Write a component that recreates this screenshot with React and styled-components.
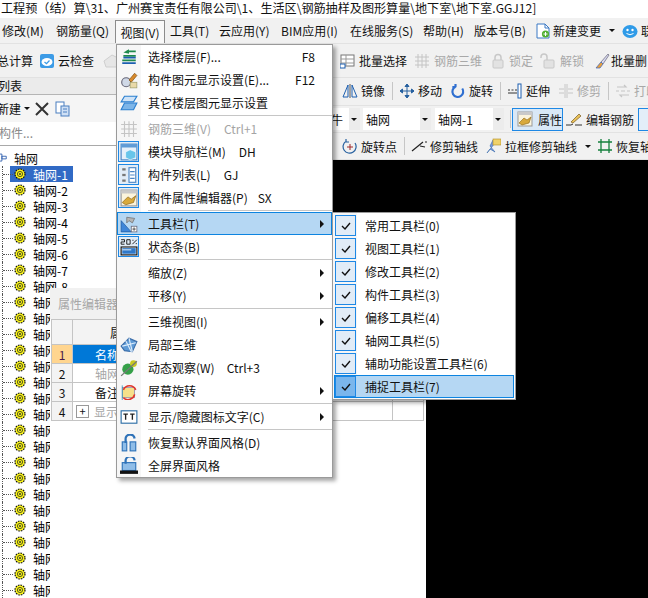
import React from "react";
import styled, { createGlobalStyle } from "styled-components";

const GlobalStyle = createGlobalStyle`
  html, body { margin: 0; padding: 0; background: #fff; }
  body { font-family: "Noto Sans CJK SC", "Noto Sans", sans-serif; font-size: 12px; color: #111; }
`;

/* ---------- icons ---------- */
const Svg = ({ children, size = 16 }) => (
  <svg width={size} height={size} viewBox="0 0 16 16" fill="none" style={{ flex: "none", display: "block" }}>
    {children}
  </svg>
);

const icons = {
  floors: <><path d="M6 3h8M3 7h11M2 11h12" stroke="#1f8a4c" strokeWidth="1.4" /><path d="M2 13.5h12M3 8.5h11" stroke="#1c5fb0" strokeWidth="1.6" /><path d="M8 1L3 4l5 1z" fill="#1f8a4c" /></>,
  display: <><circle cx="5.5" cy="10" r="4" fill="#cfd8e6" stroke="#667" /><path d="M8 8l5-6 2 2-5 6z" fill="#d98a2b" stroke="#7a4a10" strokeWidth=".6" /><rect x="9" y="10" width="6" height="5" fill="#e9d9a8" stroke="#996" strokeWidth=".6" /></>,
  otherFloors: <><path d="M4 2h11l-3 5H1z" fill="#cfe3f7" stroke="#2a7fd0" /><path d="M4 8h11l-3 6H1z" fill="#7db5e8" stroke="#2a7fd0" /></>,
  grid3d: <><path d="M1 4h14M1 8h14M1 12h14M4 1v14M8 1v14M12 1v14" stroke="#c4c4c4" /></>,
  nav: <><rect x="1" y="1" width="14" height="14" fill="#e6f0fa" stroke="#4a86c5" /><rect x="1" y="1" width="14" height="3" fill="#5f9bd6" /><path d="M9 6l5 2v5l-5 2-4-2V8z" fill="#68c5ea" stroke="#fff" strokeWidth=".5" /></>,
  list: <><rect x="2" y="2" width="3" height="2" fill="#777" /><rect x="2" y="7" width="3" height="2" fill="#777" /><rect x="2" y="12" width="3" height="2" fill="#777" /><rect x="8" y="1.5" width="6" height="13" fill="#fff" stroke="#4a86c5" /><path d="M9 5h4M9 8h4M9 11h4" stroke="#4a86c5" /></>,
  attr: <><rect x="1" y="1" width="14" height="14" fill="#fbf4dc" stroke="#999" /><rect x="1" y="1" width="14" height="3" fill="#c9c9c9" /><path d="M2 12l5-5 3 2 4-3-2 6-7 2z" fill="#d8a93c" stroke="#8a6414" strokeWidth=".6" /></>,
  toolbar: <><path d="M1 15V5l9 10z" fill="#3f86d8" stroke="#1a549c" strokeWidth=".6" /><path d="M6 2l7 1-2 4-3-2-2 2z" fill="#b5b5b5" stroke="#666" strokeWidth=".6" /><rect x="10" y="10" width="5" height="5" fill="#fff" stroke="#667" strokeWidth=".7" /><path d="M11 12.5h3M12.5 11v3" stroke="#333" strokeWidth=".7" /></>,
  status: <><rect x="1" y="8" width="14" height="7" fill="#fff" stroke="#111" /><rect x="2" y="9" width="12" height="5" fill="#2f78c9" /><path d="M2 10.5h8" stroke="#cfe3f7" /><path d="M1 1.5h3v2H1v2h3M6 1.5h3v4H6zM11 5.5l4-4M11 2h1M14 5h1" stroke="#111" strokeWidth=".8" /></>,
  local3d: <><path d="M1 9L8 2l7 3-4 9-7-1z" fill="#5f9bd6" stroke="#3a6ca8" /><path d="M5 4l5 10M8 2l3 12M2 9l12-3" stroke="#dcecfa" /></>,
  orbit: <><ellipse cx="7" cy="9" rx="5" ry="5" fill="#35a048" /><circle cx="12" cy="4" r="3" fill="#c8c820" /><path d="M1 15L15 2" stroke="#777" strokeWidth="1.2" /></>,
  rotate: <><rect x="2" y="5" width="11" height="9" fill="#f6e08a" stroke="#66a" strokeWidth=".5" /><path d="M3 7a6 6 0 0 1 11 0M13 11a6 6 0 0 1-10 3" stroke="#e0352b" strokeWidth="1.4" /><path d="M2 3v13" stroke="#39b" strokeWidth=".7" /></>,
  tt: <><rect x="1" y="2.5" width="14" height="11" fill="#fff" stroke="#2b6ea6" /><path d="M3 5.5h4M5 5.5v5M9 5.5h4M11 5.5v5" stroke="#222" strokeWidth="1.2" /></>,
  restore: <><rect x="2" y="7" width="4" height="8" fill="#8fbde8" stroke="#2e72b8" /><rect x="9" y="7" width="5" height="8" fill="#8fbde8" stroke="#2e72b8" /><path d="M5 8V5a4 4 0 0 1 8-1" stroke="#2e72b8" strokeWidth="2" /></>,
  full: <><rect x="2" y="5" width="12" height="7" fill="#8fbde8" stroke="#2e72b8" /><path d="M5 6V4a4 4 0 0 1 8-1" stroke="#2e72b8" strokeWidth="2" /><rect x="0" y="12" width="16" height="3" fill="#111" /></>,
  cloud: <><rect x="1" y="1" width="14" height="14" rx="2" fill="#3c9be6" /><ellipse cx="8" cy="9" rx="5.5" ry="4" fill="#fff" /><path d="M5.5 9l2 1.7 3-3.2" stroke="#3c9be6" strokeWidth="1.3" /></>,
  batch: <><rect x="1" y="2" width="13" height="11" fill="#fff" stroke="#777" /><path d="M1 6h13M1 10h13M6 2v11" stroke="#999" /><rect x="0" y="11" width="5" height="4" fill="#fff" stroke="#1c5fb0" /></>,
  lock: <><rect x="3" y="7" width="10" height="8" rx="1" fill="#e2e2e2" stroke="#c8c8c8" /><path d="M5 7V4.5a3 3 0 0 1 6 0V7" stroke="#c8c8c8" strokeWidth="1.5" /></>,
  unlock: <><rect x="4" y="7" width="10" height="8" rx="1" fill="#e2e2e2" stroke="#c8c8c8" /><path d="M1 5V4a3 3 0 0 1 6 0v3" stroke="#c8c8c8" strokeWidth="1.5" /></>,
  brush: <><path d="M7 9l7-8 1 1-6 9z" fill="#d8d8f0" stroke="#667" strokeWidth=".7" /><path d="M7 9l2 2-3 4H2z" fill="#e8a13c" stroke="#3a63c0" strokeWidth=".7" /></>,
  mirror: <><path d="M1 14L6 2v12z" stroke="#1c5fb0" /><path d="M15 14L10 2v12z" stroke="#1c5fb0" /><path d="M8 1v14" stroke="#555" /></>,
  move: <path d="M8 1v14M1 8h14M8 1L6 3.5h4zM8 15l-2-2.5h4zM1 8l2.5-2v4zM15 8l-2.5-2v4z" stroke="#26609f" fill="#26609f" />,
  rotateBlue: <path d="M12.5 5A6 6 0 1 1 5 3M5 3.5V0M5 3.5H1.5" stroke="#2f6fd0" strokeWidth="2.4" transform="translate(1 1) scale(.9)" />,
  extend: <><rect x="11" y="1" width="3" height="14" fill="#fff" stroke="#1c5fb0" /><path d="M1 7h2M4.5 7h2M8 7h2M1 10h9" stroke="#333" /></>,
  trim: <path d="M1 6h5M1 10h5M10 6h5M10 10h5M7 1v14M9 1v14" stroke="#c6c6c6" />,
  print: <path d="M2 4h9l-2-2M14 12H5l2 2M1 8h3M6 8h4M12 8h3" stroke="#c6c6c6" strokeWidth="1.2" />,
  pencil: <><path d="M5 11l8-8 2 2-8 7z" fill="#e8c15a" stroke="#7a5a20" strokeWidth=".7" /><path d="M0 14h5l2-1M9 14h7" stroke="#333" /></>,
  rotatePoint: <><path d="M13 5a6.5 6.5 0 1 1-9-1.8M4 1v3h3" stroke="#26609f" strokeWidth="1.2" /><path d="M8 6v6M5 9h6" stroke="#a0282a" /></>,
  trimAxis: <path d="M1 13L12 4M9 8l5 1M14 4h2" stroke="#222" strokeWidth="1.2" />,
  boxTrim: <><path d="M2 15L10 5l-2-3-3 6 5 6-5-3z" fill="#7a9ae0" stroke="#36a" strokeWidth=".6" /><rect x="8" y="1" width="8" height="6" fill="#f0d26a" stroke="#b08a20" strokeWidth=".6" /></>,
  recover: <path d="M1 4h14M1 12h14M4 1v14M12 1v14" stroke="#15803d" strokeWidth="1.3" />,
  change: <><path d="M2 1h8l4 4v10H2z" fill="#fff" stroke="#3a78c4" /><path d="M10 1v4h4" stroke="#3a78c4" /><circle cx="10.5" cy="11" r="3.6" fill="#53b033" /><path d="M10.5 9v4M8.5 11h4" stroke="#fff" /></>,
  qq: <><ellipse cx="8" cy="8.5" rx="7.5" ry="6.5" fill="#2f9be8" /><circle cx="5.5" cy="7" r="1.2" fill="#fff" /><circle cx="10.5" cy="7" r="1.2" fill="#fff" /><path d="M4.5 10.5q3.5 2.5 7 0" stroke="#fff" /></>,
  tree: <><path d="M1 2h5v3H1zM1 10h5v3H1zM9 6h5v3H9z" stroke="#2e5fae" /><path d="M6 3.5h3v4M6 11.5h3v-4" stroke="#2e5fae" /></>,
  copy: <><rect x="1" y="1" width="8" height="11" fill="#fff" stroke="#4a7fc0" /><rect x="6" y="5" width="8" height="10" fill="#cfe0f5" stroke="#4a7fc0" /><path d="M8 8h4M8 11h4" stroke="#4a7fc0" /></>,
  close: <path d="M2 2l12 12M14 2L2 14" stroke="#333" strokeWidth="2" />,
  house: <path d="M1 8l8-6 6 3v9H3z" fill="#e6e6e6" stroke="#cfcfcf" />,
};

const Icon = ({ name, size }) => <Svg size={size}>{icons[name]}</Svg>;

const Gear = () => (
  <svg width="12" height="12" viewBox="0 0 12 12" style={{ flex: "none", display: "block" }}>
    <circle cx="6" cy="6" r="5" fill="#f7f21a" stroke="#111" strokeWidth="1.2" strokeDasharray="1.6 1" />
    <circle cx="6" cy="6" r="2.6" fill="#f7f21a" stroke="#5a5a20" strokeWidth="1" />
    <circle cx="6" cy="6" r="1" fill="#333" />
  </svg>
);

/* ---------- page frame ---------- */
const Page = styled.div`
  position: relative;
  width: 648px;
  height: 598px;
  overflow: hidden;
  background: #f0f0f0;
  display: flex;
  flex-direction: column;
`;

const TitleBar = styled.div`
  height: 18px;
  flex: none;
  background: #fff;
  white-space: nowrap;
  font-size: 12.1px;
  line-height: 15px;
  padding-left: 1px;
`;

const Bar = styled.div`
  display: flex;
  align-items: center;
  flex: none;
  height: ${(p) => p.$h}px;
  padding-bottom: ${(p) => p.$lift || 0}px;
  background: #f1f1f1;
  border-bottom: 1px solid #e2e2e2;
  box-sizing: border-box;
  white-space: nowrap;
  overflow: hidden;
`;

const Cell = styled.div`
  display: flex;
  align-items: center;
  gap: ${(p) => p.$gap ?? 3}px;
  width: ${(p) => p.$w}px;
  flex: none;
  color: ${(p) => (p.$off ? "#a8a8a8" : "#111")};
`;

const MenuTab = styled(Cell)`
  height: 23px;
  align-self: flex-end;
  box-sizing: border-box;
  justify-content: center;
  background: #f9f9f9;
  border: 1px solid #8c8c8c;
  border-bottom: none;
`;

const ClippedLead = styled.span`
  margin-left: -3px;
`;

const Divider = styled.span`
  width: 1px;
  height: 18px;
  background: #c6c6c6;
  flex: none;
  margin-right: ${(p) => p.$mr}px;
`;

const Caret = styled.span`
  width: 0;
  height: 0;
  border-left: 3px solid transparent;
  border-right: 3px solid transparent;
  border-top: 3px solid #111;
`;

const Workspace = styled.div`
  flex: 1;
  display: flex;
  min-height: 0;
`;

/* ---------- left panel ---------- */
const LeftPanel = styled.div`
  width: 118px;
  flex: none;
  display: flex;
  flex-direction: column;
  background: #fff;
  overflow: hidden;
`;

const PanelTitle = styled.div`
  height: 16px;
  background: #ebebeb;
  border-bottom: 1px solid #b5b5b5;
  line-height: 16px;
  margin-left: -2px;
  flex: none;
`;

const PanelTools = styled.div`
  height: 27px;
  display: flex;
  align-items: center;
  background: #f5f5f5;
  margin-left: -3px;
  flex: none;
`;

const SearchBox = styled.div`
  height: 23px;
  background: #fff;
  border-bottom: 1px solid #a9a9a9;
  color: #8a8a8a;
  line-height: 22px;
  margin-left: -1px;
  flex: none;
`;

const Tree = styled.div`
  flex: 1;
  padding-top: 4px;
  font-size: 12px;
`;

const TreeRoot = styled.div`
  display: flex;
  align-items: center;
  gap: 6px;
  height: 16px;
  margin-left: -6px;
`;

const TreeRow = styled.div`
  position: relative;
  height: 16px;
  display: flex;
  align-items: center;
  padding-left: 14px;
  &::before {
    content: "";
    position: absolute;
    left: 2px;
    top: 0;
    bottom: 0;
    border-left: 1px dotted #555;
  }
  &::after {
    content: "";
    position: absolute;
    left: 3px;
    top: 8px;
    width: 10px;
    border-top: 1px dotted #555;
  }
`;

const TreeLabel = styled.span`
  display: flex;
  align-items: center;
  gap: 7px;
  height: 16px;
  width: ${(p) => p.$w}px;
  flex: none;
  box-sizing: border-box;
  margin-left: -4px;
  padding-left: 4px;
  white-space: nowrap;
  overflow: hidden;
  background: ${(p) => (p.$on ? "#316ac5" : "transparent")};
  color: ${(p) => (p.$on ? "#fff" : "#000")};
`;

/* ---------- right side ---------- */
const RightSide = styled.div`
  flex: 1;
  display: flex;
  flex-direction: column;
  min-width: 0;
`;

const Combo = styled.div`
  width: ${(p) => p.$w}px;
  height: 22px;
  flex: none;
  display: flex;
  align-items: center;
  justify-content: space-between;
  box-sizing: border-box;
  padding: 0 3px 0 3px;
  margin-right: ${(p) => p.$mr}px;
  overflow: hidden;
  background: linear-gradient(to right, #fff calc(100% - 11px), #ececec calc(100% - 11px));
`;

const ToggleButton = styled.div`
  display: flex;
  align-items: center;
  gap: 5px;
  height: 23px;
  width: 51px;
  flex: none;
  box-sizing: border-box;
  padding-left: 4px;
  border: 1px solid #1e88e5;
  background: #d9e8f6;
`;

const ToggleBox = styled.div`
  width: 22px;
  height: 23px;
  flex: none;
  border: 1px solid #1e88e5;
  box-sizing: border-box;
  background: #e3eef9;
`;

const Canvas = styled.div`
  flex: 1;
  background: #000;
`;

/* ---------- property window ---------- */
const PropWindow = styled.div`
  position: absolute;
  left: 50px;
  top: 288px;
  width: 376px;
  height: 310px;
  background: #fff;
  display: flex;
  flex-direction: column;
`;

const PropTitle = styled.div`
  height: 31px;
  flex: none;
  background: #f1f1f1;
  color: #a6a6a6;
  padding: 7px 0 0 8px;
  box-sizing: border-box;
`;

const PropGrid = styled.div`
  margin-left: 1px;
  display: grid;
  grid-template-columns: 21px 58px 262px 31px;
  grid-template-rows: 25px 19px 19px 19px 19px;
  border-top: 1px solid #c4c4c4;
  border-left: 1px solid #c4c4c4;
`;

const PropCell = styled.div`
  display: flex;
  align-items: center;
  gap: 5px;
  box-sizing: border-box;
  padding-left: ${(p) => p.$pad ?? 0}px;
  justify-content: ${(p) => (p.$center ? "center" : "flex-start")};
  border-right: 1px solid #c4c4c4;
  border-bottom: 1px solid #c4c4c4;
  background: ${(p) => p.$bg || "#fff"};
  color: ${(p) => p.$color || "#111"};
  white-space: nowrap;
  overflow: hidden;
`;

const PlusBox = styled.span`
  width: 11px;
  height: 11px;
  border: 1px solid #999;
  font-size: 11px;
  line-height: 10px;
  text-align: center;
  color: #111;
  flex: none;
`;

/* ---------- menus ---------- */
const Menu = styled.div`
  position: absolute;
  left: ${(p) => p.$x}px;
  top: ${(p) => p.$y}px;
  width: ${(p) => p.$w}px;
  box-sizing: border-box;
  padding: ${(p) => p.$pad}px;
  background: linear-gradient(to right, #f6f6f6 ${(p) => p.$gutter}px, #fff ${(p) => p.$gutter}px);
  border: 1px solid #9a9a9a;
  box-shadow: 3px 3px 4px rgba(0, 0, 0, 0.35);
`;

const Row = styled.div`
  position: relative;
  display: flex;
  align-items: center;
  height: 23px;
  box-sizing: border-box;
  padding-left: 31px;
  color: ${(p) => (p.$off ? "#a4a4a4" : "#111")};
  background: ${(p) => (p.$hot ? "#b5d7f3" : "transparent")};
  outline: ${(p) => (p.$hot ? "1px solid #0d84e0" : "none")};
  outline-offset: -1px;
`;

const RowIcon = styled.span`
  position: absolute;
  left: 1px;
  top: 1px;
  width: 21px;
  height: 21px;
  box-sizing: border-box;
  display: flex;
  align-items: center;
  justify-content: center;
  border: 1px solid ${(p) => (p.$on ? "#1e88e5" : "transparent")};
  background: ${(p) => (p.$on ? (p.$hot ? "#7ab6ec" : "#e1ecf7") : "transparent")};
`;

const Shortcut = styled.span`
  margin-left: ${(p) => p.$gap}px;
`;

const RightKey = styled.span`
  position: absolute;
  right: 17px;
`;

const Arrow = styled.span`
  position: absolute;
  right: 8px;
  width: 0;
  height: 0;
  border-top: 4px solid transparent;
  border-bottom: 4px solid transparent;
  border-left: 4px solid #111;
`;

const Separator = styled.div`
  height: 1px;
  margin: 1px 0 1px 31px;
  background: #c6c6c6;
`;

/* ---------- data ---------- */
const viewMenu = [
  { icon: "floors", label: "选择楼层(F)...", key: "F8" },
  { icon: "display", label: "构件图元显示设置(E)...", key: "F12" },
  { icon: "otherFloors", label: "其它楼层图元显示设置" },
  "sep",
  { icon: "grid3d", label: "钢筋三维(V)", short: "Ctrl+1", gap: 13, off: true },
  { icon: "nav", label: "模块导航栏(M)", short: "DH", gap: 13, on: true },
  { icon: "list", label: "构件列表(L)", short: "GJ", gap: 13, on: true },
  { icon: "attr", label: "构件属性编辑器(P)", short: "SX", gap: 10, on: true },
  "sep",
  { icon: "toolbar", label: "工具栏(T)", sub: true, hot: true },
  { icon: "status", label: "状态条(B)", on: true },
  "sep",
  { label: "缩放(Z)", sub: true },
  { label: "平移(Y)", sub: true },
  "sep",
  { label: "三维视图(I)", sub: true },
  { icon: "local3d", label: "局部三维" },
  { icon: "orbit", label: "动态观察(W)", short: "Ctrl+3", gap: 12 },
  { icon: "rotate", label: "屏幕旋转", sub: true },
  "sep",
  { icon: "tt", label: "显示/隐藏图标文字(C)", sub: true },
  "sep",
  { icon: "restore", label: "恢复默认界面风格(D)" },
  { icon: "full", label: "全屏界面风格" },
];

const toolbarMenu = ["常用工具栏(0)", "视图工具栏(1)", "修改工具栏(2)", "构件工具栏(3)", "偏移工具栏(4)", "轴网工具栏(5)", "辅助功能设置工具栏(6)", "捕捉工具栏(7)"];

const Check = () => (
  <svg width="10" height="8" viewBox="0 0 10 8" style={{ display: "block" }}>
    <path d="M1 4l3 3 5-6" stroke="#111" strokeWidth="1.4" fill="none" />
  </svg>
);

const T = ({ w, icon, off, gap, children }) => (
  <Cell $w={w} $off={off} $gap={gap}>
    {icon && <Icon name={icon} />}
    {children}
  </Cell>
);

const App = () => {
  return (
    <Page>
      <GlobalStyle />
      <TitleBar>工程预（结）算\31、广州赛宝责任有限公司\1、生活区\钢筋抽样及图形算量\地下室\地下室.GGJ12]</TitleBar>

      <Bar $h={26}>
        <T w={2} />
        <T w={54}>修改(M)</T>
        <T w={59}>钢筋量(Q)</T>
        <MenuTab $w={50}>视图(V)</MenuTab>
        <T w={5} />
        <T w={49}>工具(T)</T>
        <T w={62}>云应用(Y)</T>
        <T w={69}>BIM应用(I)</T>
        <T w={73}>在线服务(S)</T>
        <T w={51}>帮助(H)</T>
        <T w={61}>版本号(B)</T>
        <T w={18} icon="change" />
        <T w={56}>新建变更</T>
        <T w={13}><Caret /></T>
        <T w={19} icon="qq" />
        <T w={12}>联</T>
      </Bar>

      <Bar $h={34}>
        <T w={39}><ClippedLead>总计算</ClippedLead></T>
        <T w={64} icon="cloud">云检查</T>
        <T w={237} icon="house" />
        <T w={74} icon="batch">批量选择</T>
        <T w={76} icon="grid3d" off gap={4}>钢筋三维</T>
        <T w={50} icon="lock" off>锁定</T>
        <T w={54} icon="unlock" off gap={4}>解锁</T>
        <T w={60} icon="brush" gap={1}>批量删</T>
      </Bar>

      <Workspace>
        <LeftPanel>
          <PanelTitle>列表</PanelTitle>
          <PanelTools>
            <T w={27}>新建</T>
            <T w={10}><Caret /></T>
            <T w={21} icon="close" />
            <T w={20} icon="copy" />
          </PanelTools>
          <SearchBox>构件...</SearchBox>
          <Tree>
            <TreeRoot>
              <Icon name="tree" size={14} />
              <span>轴网</span>
            </TreeRoot>
            {Array.from({ length: 27 }, (_, i) => (
              <TreeRow key={i}>
                <TreeLabel $on={i === 0} $w={i < 8 ? 63 : 40}>
                  <Gear />
                  轴网-{i + 1}
                </TreeLabel>
              </TreeRow>
            ))}
          </Tree>
        </LeftPanel>

        <RightSide>
          <Bar $h={28} $lift={2}>
            <T w={224} />
            <T w={50} icon="mirror">镜像</T>
            <Divider $mr={6} />
            <T w={51} icon="move">移动</T>
            <T w={50} icon="rotateBlue">旋转</T>
            <Divider $mr={6} />
            <T w={51} icon="extend">延伸</T>
            <T w={50} icon="trim" off>修剪</T>
            <Divider $mr={6} />
            <T w={40} icon="print" off>打印</T>
          </Bar>
          <Bar $h={27}>
            <T w={210} />
            <Combo $w={32} $mr={3}>牛<Caret /></Combo>
            <Combo $w={68} $mr={4}>轴网<Caret /></Combo>
            <Combo $w={69} $mr={6}>轴网-1<Caret /></Combo>
            <Divider $mr={1} />
            <ToggleButton>
              <Icon name="attr" />
              属性
            </ToggleButton>
            <T w={3} />
            <T w={72} icon="pencil" gap={4}>编辑钢筋</T>
            <ToggleBox />
          </Bar>
          <Bar $h={27}>
            <T w={224} />
            <T w={62} icon="rotatePoint">旋转点</T>
            <Divider $mr={6} />
            <T w={74} icon="trimAxis">修剪轴线</T>
            <T w={100} icon="boxTrim" gap={4}>拉框修剪轴线</T>
            <T w={12}><Caret /></T>
            <T w={60} icon="recover">恢复轴</T>
          </Bar>
          <Canvas />
        </RightSide>
      </Workspace>

      <PropWindow>
        <PropTitle>属性编辑器</PropTitle>
        <PropGrid>
          <PropCell $bg="#f3f3f3" />
          <PropCell $bg="#f3f3f3" $pad={37}>属性</PropCell>
          <PropCell $bg="#f3f3f3" />
          <PropCell $bg="#f3f3f3" />

          <PropCell $bg="#ffd58f" $center $color="#4a1a4a">1</PropCell>
          <PropCell $bg="#0078d7" $color="#fff" $pad={22}>名称</PropCell>
          <PropCell />
          <PropCell />

          <PropCell $bg="#f3f3f3" $center>2</PropCell>
          <PropCell $color="#a6a6a6" $pad={22}>轴网</PropCell>
          <PropCell />
          <PropCell />

          <PropCell $bg="#f3f3f3" $center>3</PropCell>
          <PropCell $pad={22}>备注</PropCell>
          <PropCell />
          <PropCell />

          <PropCell $bg="#f3f3f3" $center>4</PropCell>
          <PropCell $color="#a6a6a6" $pad={3}><PlusBox>+</PlusBox>显示</PropCell>
          <PropCell />
          <PropCell />
        </PropGrid>
      </PropWindow>

      <Menu $x={116} $y={44} $w={217} $pad={0} $gutter={24}>
        {viewMenu.map((item, i) =>
          item === "sep" ? (
            <Separator key={i} />
          ) : (
            <Row key={i} $off={item.off} $hot={item.hot}>
              {item.icon && (
                <RowIcon $on={item.on}>
                  <Icon name={item.icon} size={18} />
                </RowIcon>
              )}
              {item.label}
              {item.short && <Shortcut $gap={item.gap}>{item.short}</Shortcut>}
              {item.key && <RightKey>{item.key}</RightKey>}
              {item.sub && <Arrow />}
            </Row>
          )
        )}
      </Menu>

      <Menu $x={332} $y={212} $w={184} $pad={1} $gutter={24}>
        {toolbarMenu.map((label, i) => (
          <Row key={i} $hot={i === 7}>
            <RowIcon $on $hot={i === 7}>
              <Check />
            </RowIcon>
            {label}
          </Row>
        ))}
      </Menu>
    </Page>
  );
};

export default App;
